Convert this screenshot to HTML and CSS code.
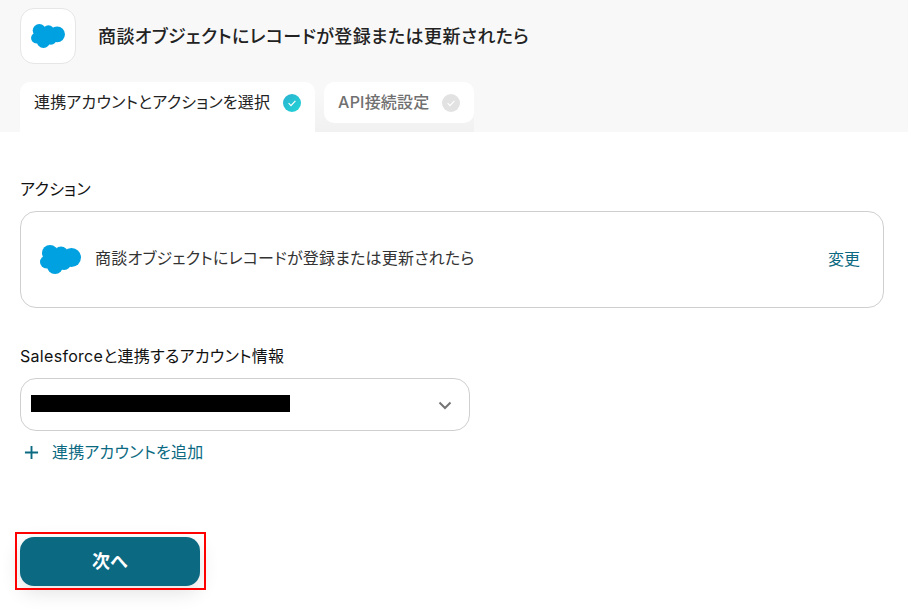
FILE: index.html
```html
<!DOCTYPE html>
<html lang="ja">
<head>
<meta charset="utf-8">
<title>Salesforce</title>
<link rel="stylesheet" href="styles.css">
</head>
<body>
<svg class="defs" width="0" height="0" aria-hidden="true">
  <symbol id="cloud" viewBox="0 0 41 29">
    <g fill="#00a1e0">
      <circle cx="10" cy="8" r="8"/>
      <circle cx="21" cy="8.5" r="7"/>
      <circle cx="31.5" cy="12.5" r="9.5"/>
      <circle cx="24" cy="18" r="7"/>
      <circle cx="15" cy="21" r="8"/>
      <circle cx="6.5" cy="17" r="6.5"/>
      <rect x="8" y="8" width="20" height="12"/>
    </g>
  </symbol>
</svg>
<header class="head">
  <div class="title-row">
    <div class="logo-box"><svg class="cloud-sm"><use href="#cloud"/></svg></div>
    <h1 class="title">商談オブジェクトにレコードが登録または更新されたら</h1>
  </div>
  <div class="tabs">
    <div class="tab tab-active">
      <span>連携アカウントとアクションを選択</span>
      <svg class="check" viewBox="0 0 18 18">
        <defs><linearGradient id="tg" x1="0" y1="0" x2="1" y2="1"><stop offset="0" stop-color="#2ab0d0"/><stop offset="1" stop-color="#22d6d6"/></linearGradient></defs>
        <circle cx="9" cy="9" r="9" fill="url(#tg)"/>
        <path d="M5.6 9.2l2.4 2.4 4.4-4.8" fill="none" stroke="#fff" stroke-width="1.2"/>
      </svg>
    </div>
    <div class="tab-slot">
      <div class="tab tab-idle">
        <span>API接続設定</span>
        <svg class="check" viewBox="0 0 18 18">
          <circle cx="9" cy="9" r="9" fill="#e2e2e2"/>
          <path d="M5.6 9.2l2.4 2.4 4.4-4.8" fill="none" stroke="#fff" stroke-width="1.2"/>
        </svg>
      </div>
    </div>
  </div>
</header>
<main class="main">
  <div class="label label-first">アクション</div>
  <div class="card">
    <svg class="cloud-lg"><use href="#cloud"/></svg>
    <span class="card-text">商談オブジェクトにレコードが登録または更新されたら</span>
    <span class="change">変更</span>
  </div>
  <div class="label label-second">Salesforceと連携するアカウント情報</div>
  <div class="select">
    <div class="redact"></div>
    <svg class="chev" viewBox="0 0 14 9"><path d="M1.5 1.5L7 7l5.5-5.5" fill="none" stroke="#757575" stroke-width="2"/></svg>
  </div>
  <div class="add">
    <svg class="plus" viewBox="0 0 16 16"><path d="M8 1v14M1 8h14" fill="none" stroke="#0b6a82" stroke-width="2"/></svg>
    <span>連携アカウントを追加</span>
  </div>
  <div class="btn-wrap">
    <button class="btn" type="button">次へ</button>
    <div class="mark"></div>
  </div>
</main>
</body>
</html>
```

FILE: styles.css
```css
* { box-sizing: border-box; }
html, body { margin: 0; padding: 0; }
body {
  width: 908px;
  height: 615px;
  overflow: hidden;
  background: #fff;
  color: #222;
  font-family: "Inter", "Noto Sans CJK JP", "Noto Sans", sans-serif;
  font-feature-settings: "palt";
}
.defs { position: absolute; }
.head {
  height: 132px;
  background: #f8f8f8;
  padding: 8px 20px 0;
}
.title-row {
  display: flex;
  align-items: center;
  gap: 22px;
  height: 56px;
  margin-bottom: 18px;
}
.logo-box {
  width: 56px;
  height: 56px;
  display: flex;
  align-items: center;
  justify-content: center;
  background: #fff;
  border: 1px solid #e6e6e6;
  border-radius: 14px;
}
.cloud-sm { width: 34px; height: 24px; }
.title {
  margin: 2px 0 0;
  font-size: 18px;
  font-weight: 500;
  letter-spacing: 0.4px;
  line-height: 24px;
  color: #222;
}
.tabs {
  display: flex;
  align-items: flex-start;
}
.tab {
  display: flex;
  align-items: center;
  gap: 13px;
  height: 41px;
  padding: 0 14px;
  font-size: 16px;
  font-weight: 400;
  letter-spacing: 0.2px;
  background: #fff;
}
.tab-active {
  height: 50px;
  padding-bottom: 9px;
  border-radius: 10px 10px 0 0;
  color: #222;
}
.tab span { margin-top: -4px; }
.tab-slot {
  height: 50px;
  padding-left: 9px;
  background: linear-gradient(#f8f8f8 20%, #f1f1f1);
}
.tab-idle {
  border-radius: 10px;
  color: #707070;
  font-weight: 500;
}
.check { width: 18px; height: 18px; flex: none; }
.main { padding: 0 24px 0 20px; }
.label {
  font-size: 16px;
  font-weight: 400;
  letter-spacing: 0.3px;
  line-height: 20px;
  color: #111;
}
.label-first { margin-top: 47px; }
.label-second { margin-top: 38px; }
.card {
  display: flex;
  align-items: center;
  height: 97px;
  margin-top: 12px;
  padding: 0 23px 0 19px;
  border: 1px solid #cfcfcf;
  border-radius: 16px;
}
.cloud-lg { width: 41px; height: 29px; flex: none; }
.card-text {
  margin-left: 14px;
  margin-top: -5px;
  font-size: 16px;
  letter-spacing: 0.2px;
  color: #333;
}
.change {
  margin-left: auto;
  margin-top: -4px;
  font-size: 16px;
  font-weight: 400;
  color: #0b6a82;
}
.select {
  display: flex;
  align-items: center;
  justify-content: space-between;
  width: 450px;
  height: 53px;
  margin-top: 12px;
  padding: 0 17px 0 10px;
  border: 1px solid #cfcfcf;
  border-radius: 16px;
}
.redact { width: 259px; height: 17px; background: #000; margin-top: -3px; }
.chev { width: 14px; height: 9px; margin-top: 1px; }
.add {
  display: flex;
  align-items: center;
  gap: 13px;
  height: 20px;
  margin-top: 11px;
  padding-left: 4px;
  font-size: 16px;
  font-weight: 400;
  letter-spacing: 0.2px;
  color: #0b6a82;
}
.add span { margin-top: -2px; }
.plus { width: 15px; height: 15px; }
.btn-wrap {
  position: relative;
  width: 180px;
  margin-top: 75px;
}
.btn {
  display: block;
  width: 180px;
  height: 49px;
  padding-bottom: 4px;
  border: 0;
  border-radius: 14px;
  background: #0b6a82;
  color: #fff;
  font-family: inherit;
  font-size: 18px;
  font-weight: 700;
  box-shadow: 0 6px 20px rgba(0, 0, 0, 0.12);
}
.mark {
  position: absolute;
  left: -5px;
  top: -5px;
  width: 191px;
  height: 58px;
  border: 2px solid #f00;
}
```
